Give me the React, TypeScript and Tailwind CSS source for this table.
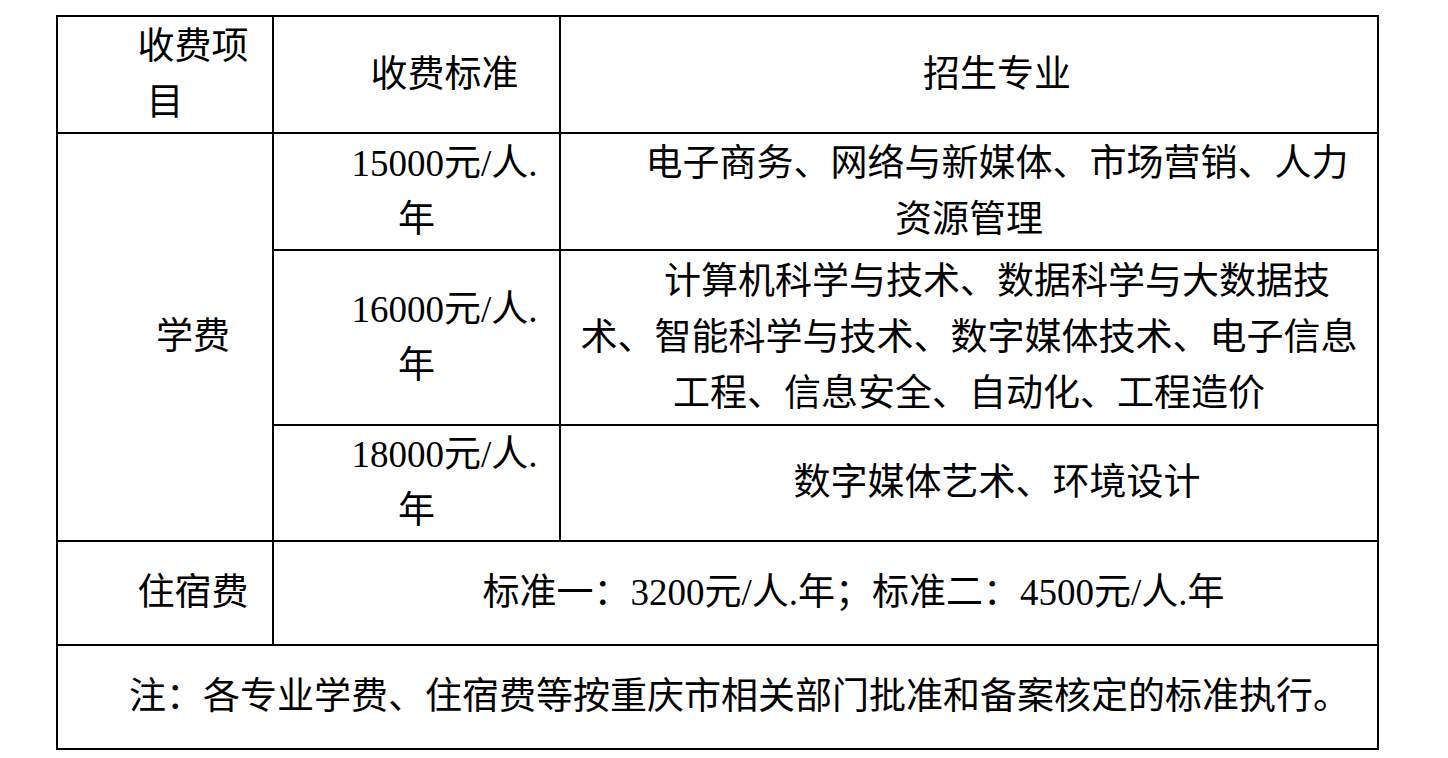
import React from "react";

const cell =
  "border-2 border-black px-3 align-middle text-center indent-[56px] leading-[56px]";

export default function App() {
  return (
    <div
      className="w-[1448px] h-[758px] bg-white text-black pt-[15px] pl-[56px]"
      style={{ fontFamily: '"Liberation Serif", "Noto Sans CJK SC", serif' }}
    >
      <table className="border-collapse table-fixed w-[1321px] text-[37px]">
        <colgroup>
          <col className="w-[216px]" />
          <col className="w-[287px]" />
          <col className="w-[818px]" />
        </colgroup>
        <tbody>
          <tr className="h-[117px]">
            <td className={cell}>收费项目</td>
            <td className={cell}>收费标准</td>
            <td className={cell}>招生专业</td>
          </tr>
          <tr className="h-[117px]">
            <td className={cell} rowSpan={3}>
              学费
            </td>
            <td className={cell}>15000元/人.年</td>
            <td className={cell}>电子商务、网络与新媒体、市场营销、人力资源管理</td>
          </tr>
          <tr className="h-[175px]">
            <td className={cell}>16000元/人.年</td>
            <td className={cell}>
              计算机科学与技术、数据科学与大数据技术、智能科学与技术、数字媒体技术、电子信息工程、信息安全、自动化、工程造价
            </td>
          </tr>
          <tr className="h-[116px]">
            <td className={cell}>18000元/人.年</td>
            <td className={cell}>数字媒体艺术、环境设计</td>
          </tr>
          <tr className="h-[104px]">
            <td className={cell}>住宿费</td>
            <td className={cell} colSpan={2}>
              标准一：3200元/人.年；标准二：4500元/人.年
            </td>
          </tr>
          <tr className="h-[104px]">
            <td
              className="border-2 border-black px-3 align-middle text-left indent-[59px] leading-[56px]"
              colSpan={3}
            >
              注：各专业学费、住宿费等按重庆市相关部门批准和备案核定的标准执行。
            </td>
          </tr>
        </tbody>
      </table>
    </div>
  );
}
